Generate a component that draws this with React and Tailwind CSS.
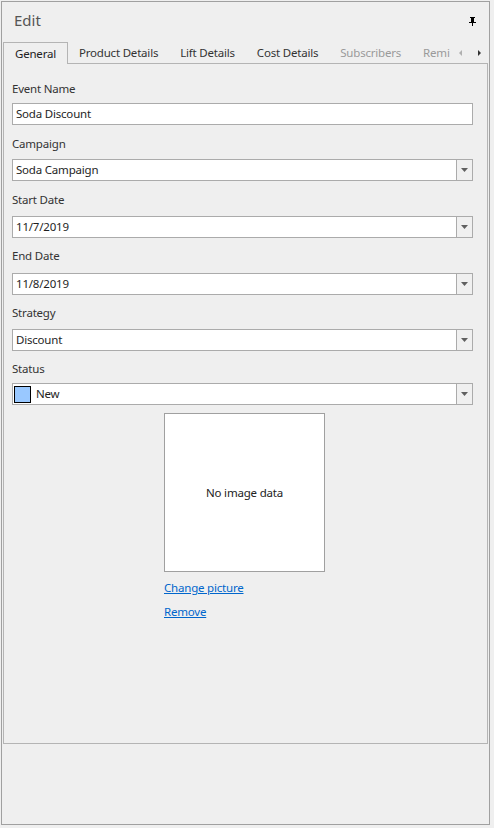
const font = { fontFamily: '"Noto Sans", "Open Sans", sans-serif' }

const Arrow = () => (
  <svg width="7" height="4" viewBox="0 0 7 4" className="block">
    <path d="M0 0h7L3.5 4z" fill="#606060" />
  </svg>
)

const Field = ({ label, value, mt, gap, dropdown, swatch }) => (
  <div className={mt}>
    <div className="h-[16px] leading-[16px] text-[#333]">{label}</div>
    <div className={`${gap} h-[22px] flex border border-[#ababab] bg-white`}>
      <div className="flex-1 flex items-center pl-[3px] text-[#1e1e1e] overflow-hidden whitespace-nowrap">
        {swatch && <span className="w-[17px] h-[17px] -ml-[2px] mr-[5px] border border-black bg-[#99c8ff]" />}
        {value}
      </div>
      {dropdown && (
        <div className="w-[16px] border-l border-[#ababab] bg-[#f0f0f0] flex items-center justify-center">
          <Arrow />
        </div>
      )}
    </div>
  </div>
)

// last tab is scrolled partly out of view
const tabs = [
  { name: 'Product Details' },
  { name: 'Lift Details' },
  { name: 'Cost Details' },
  { name: 'Subscribers', dim: true },
  { name: 'Remi', dim: true },
]

export default function App() {
  return (
    <div className="w-[494px] h-[828px] bg-[#efefef] pt-[1px] pl-[1px] text-[11.5px] tracking-[-0.2px]" style={font}>
      <div className="w-[489px] h-[824px] border border-[#a0a0a0] flex flex-col">
        {/* header */}
        <div className="h-[40px] flex items-center justify-between pl-[12px] pr-[13px] pb-[2px]">
          <span className="text-[15px] text-[#555] tracking-normal pb-[2px]">Edit</span>
          <svg width="7" height="9" viewBox="0 0 7 9">
            <path d="M1 0h5v1H5v4h2v1H4v3H3V6H0V5h2V1H1z" fill="#000" />
          </svg>
        </div>

        {/* tab strip */}
        <div className="h-[21px] flex items-end pl-[1px] relative z-10">
          <div className="flex-1 min-w-0 flex items-end">
            <div className="h-[22px] -mb-[1px] px-[11px] flex items-center border border-b-0 border-[#b4b4b4] bg-[#efefef] text-[#222]">
              General
            </div>
            {tabs.map(t => (
              <div
                key={t.name}
                className={`h-[21px] px-[11px] flex items-center whitespace-nowrap ${t.dim ? 'text-[#9a9a9a]' : 'text-[#333]'}`}
              >
                {t.name}
              </div>
            ))}
          </div>
          <div className="w-[36px] h-[21px] flex items-center gap-[16px] pl-[6px]">
            <svg width="3" height="6" viewBox="0 0 3 6"><path d="M3 0v6L0 3z" fill="#b0b0b0" /></svg>
            <svg width="3" height="6" viewBox="0 0 3 6"><path d="M0 0v6l3-3z" fill="#333" /></svg>
          </div>
        </div>

        {/* tab page */}
        <div className="mx-[1px] h-[681px] border border-[#b4b4b4] pl-[8px] pr-[14px] pt-[17px]">
          <Field label="Event Name" value="Soda Discount" gap="mt-[6px]" />
          <Field label="Campaign" value="Soda Campaign" mt="mt-[11px]" gap="mt-[7px]" dropdown />
          <Field label="Start Date" value="11/7/2019" mt="mt-[11px]" gap="mt-[8px]" dropdown />
          <Field label="End Date" value="11/8/2019" mt="mt-[10px]" gap="mt-[9px]" dropdown />
          <Field label="Strategy" value="Discount" mt="mt-[10px]" gap="mt-[8px]" dropdown />
          <Field label="Status" value="New" mt="mt-[10px]" gap="mt-[6px]" dropdown swatch />

          <div className="ml-[152px] mt-[8px] w-[161px]">
            <div className="h-[159px] border border-[#a0a0a0] bg-white flex items-center justify-center text-[#222]">
              No image data
            </div>
            <div className="mt-[8px] leading-[16px] text-[#0066cc] underline">Change picture</div>
            <div className="mt-[8px] leading-[16px] text-[#0066cc] underline">Remove</div>
          </div>
        </div>
      </div>
    </div>
  )
}
